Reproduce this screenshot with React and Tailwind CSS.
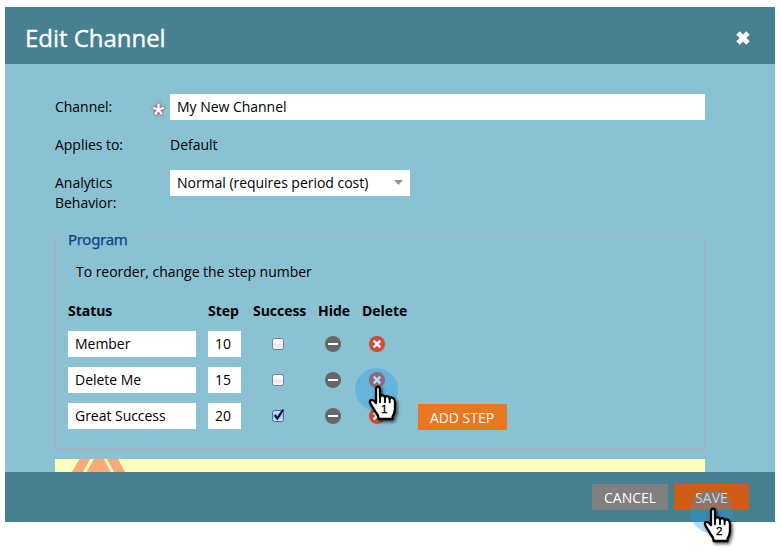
const FONT = "font-['Open_Sans','Noto_Sans',sans-serif]";

function Pointer({ label, uid }) {
  return (
    <svg width="56" height="66" viewBox="0 0 168 198" className="block overflow-visible">
      <defs>
        <filter id={uid} x="-30%" y="-30%" width="170%" height="170%">
          <feDropShadow dx="5" dy="6" stdDeviation="4" floodColor="#000" floodOpacity="0.6" />
        </filter>
      </defs>
      <circle cx="65" cy="65" r="64.5" fill="#1c9fed" fillOpacity="0.35" />
      <g filter={`url(#${uid})`}>
        <path
          d="M63 105V64Q63 56 69 56Q75 56 75 64V87Q77 81 84 82Q89 83 90 89Q93 83 99 85Q104 87 104 92Q108 86 114 90Q120 94 120 103V124Q119 136 113 145L112 153H71L69 143Q65 136 61 131L47 108Q42 99 48 96Q55 94 63 105Z"
          fill="#fff"
          stroke="#000"
          strokeWidth="7"
          strokeLinejoin="round"
        />
        <path d="M75 84V103M90 87V103M104 91V103" stroke="#000" strokeWidth="5.500" strokeLinecap="round" />
      </g>
      <text
        x="88"
        y="136"
        textAnchor="middle"
        fontSize="35"
        fontFamily="Liberation Sans, Arial, sans-serif"
        fill="#000"
        stroke="#000"
        strokeWidth="0.8"
        letterSpacing="0"
      >
        {label}
      </text>
    </svg>
  );
}

function Check({ checked }) {
  return (
    <svg width="14" height="14" viewBox="0 0 14 14" className="block overflow-visible">
      <defs>
        <linearGradient id="boxOff" x1="0" y1="0" x2="0" y2="1">
          <stop offset="0" stopColor="#fff" />
          <stop offset="0.5" stopColor="#f3f3f3" />
          <stop offset="0.55" stopColor="#e6e6e6" />
          <stop offset="1" stopColor="#fafafa" />
        </linearGradient>
        <linearGradient id="boxOn" x1="0" y1="0" x2="0" y2="1">
          <stop offset="0" stopColor="#d2e6fa" />
          <stop offset="0.5" stopColor="#8fc3f2" />
          <stop offset="1" stopColor="#d0f3ff" />
        </linearGradient>
      </defs>
      <rect
        x="1.500"
        y="1.500"
        width="11"
        height="11"
        rx="2"
        fill={checked ? "url(#boxOn)" : "url(#boxOff)"}
        stroke={checked ? "#4a62a8" : "#70858c"}
      />
      {checked && <path d="M3.800 6L6.300 9.500L12.300 0.500" fill="none" stroke="#0b1126" strokeWidth="2.200" />}
    </svg>
  );
}

function HideIcon() {
  return (
    <svg width="16" height="16" viewBox="0 0 16 16" className="block">
      <circle cx="8" cy="8" r="8" fill="#666" />
      <path d="M3 8H13" stroke="#fff" strokeWidth="2" />
    </svg>
  );
}

function DeleteIcon() {
  return (
    <svg width="16" height="16" viewBox="0 0 16 16" className="block">
      <circle cx="8" cy="8" r="8" fill="#cf4b34" />
      <path d="M4.700 4.700L11.300 11.300M11.300 4.700L4.700 11.300" stroke="#fff" strokeWidth="2.500" />
    </svg>
  );
}

const rows = [
  { name: "Member", step: "10", checked: false },
  { name: "Delete Me", step: "15", checked: false, pointer: true },
  { name: "Great Success", step: "20", checked: true, last: true },
];

export default function App() {
  return (
    <div
      className={`h-[555px] w-[782px] overflow-hidden bg-white pt-[7px] pl-[5px] text-[14px] leading-5 tracking-[-0.03px] text-black ${FONT}`}
    >
      <div className="flex h-[515px] w-[770px] flex-col bg-[#8ac1d3]">
        <header className="flex h-[57px] shrink-0 items-center justify-between bg-[#468091] pr-[25px] pl-5">
          <h1 className="pt-1 text-[24px] leading-8 text-white [-webkit-text-stroke:0.35px_white]">Edit Channel</h1>
          <svg width="14" height="14" viewBox="0 0 14 14" className="mt-1 block">
            <path d="M2 2L12 12M12 2L2 12" stroke="#fff" strokeWidth="4.800" />
          </svg>
        </header>

        <main className="flex h-[408px] shrink-0 flex-col overflow-hidden px-[50px] pt-[30px]">
          <div className="flex h-[26px] w-[650px] items-center">
            <span className="w-24">Channel:</span>
            <span className="flex w-[19px] items-center">
              <svg width="15" height="15" viewBox="0 0 15 15" className="mt-1 block overflow-visible">
                <defs>
                  <filter id="requiredGlow" x="-40%" y="-40%" width="180%" height="180%">
                    <feDropShadow dx="0" dy="0" stdDeviation="1.200" floodColor="#c02a36" floodOpacity="1" />
                    <feDropShadow dx="0" dy="0" stdDeviation="1.200" floodColor="#c02a36" floodOpacity="0.4" />
                  </filter>
                </defs>
                <path
                  filter="url(#requiredGlow)"
                  d="M7.500 7.500V1.800M7.500 7.500L2 5.900M7.500 7.500L13 5.900M7.500 7.500L4.200 12.300M7.500 7.500L10.800 12.300"
                  stroke="#fff"
                  strokeWidth="1.900"
                />
              </svg>
            </span>
            <span className="flex h-[26px] flex-1 items-center bg-white pl-[7px]">My New Channel</span>
          </div>

          <div className="mt-[15px] flex h-5">
            <span className="w-[115px]">Applies to:</span>
            <span>Default</span>
          </div>

          <div className="mt-[15px] flex h-[46px]">
            <span className="w-[115px] pt-[3px] pr-10">Analytics Behavior:</span>
            <span className="flex h-[26px] w-60 items-center justify-between bg-white px-[7px]">
              Normal (requires period cost)
              <svg width="9" height="5" viewBox="0 0 9 5" className="-mt-0.5 block">
                <path d="M0 0H9L4.500 5Z" fill="#929292" />
              </svg>
            </span>
          </div>

          <fieldset className="mt-[13px] h-[220px] w-[650px] shrink-0 border border-solid border-[#b5a9bd] pl-3">
            <legend className="-ml-0.5 h-[19px] pr-0.5 pl-0.5 font-['Noto_Sans','Open_Sans',sans-serif] text-[15px] leading-5 tracking-[-0.3px] text-[#15428b] [-webkit-text-stroke:0.25px_#15428b]">
              Program
            </legend>
            <p className="mt-[14px] pl-2">To reorder, change the step number</p>
            <div className="mt-[19px] flex h-5 font-bold whitespace-nowrap">
              <span className="w-[140px]">Status</span>
              <span className="w-[45px]">Step</span>
              <span className="w-[65px]">Success</span>
              <span className="w-11">Hide</span>
              <span>Delete</span>
            </div>
            <div className="mt-2.5 flex flex-col gap-2.5">
              {rows.map((r) => (
                <div key={r.name} className="flex h-[26px] items-center">
                  <span className="mr-3 flex h-[26px] w-32 items-center bg-white pl-[7px]">{r.name}</span>
                  <span className="mr-[30px] flex h-[26px] w-[33px] items-center bg-white pl-[7px]">{r.step}</span>
                  <Check checked={r.checked} />
                  <span className="mr-7 ml-10">
                    <HideIcon />
                  </span>
                  <span className="relative">
                    <DeleteIcon />
                    {r.pointer && (
                      <span className="absolute top-[-4px] left-[-14px] z-10">
                        <Pointer label="1" uid="pointerOne" />
                      </span>
                    )}
                  </span>
                  {r.last && (
                    <button className="mt-0.5 ml-[33px] h-[26px] w-[89px] bg-[#e87722] pt-0.5 pr-px text-white">
                      ADD STEP
                    </button>
                  )}
                </div>
              ))}
            </div>
          </fieldset>

          <div className="mt-2.5 h-[13px] w-[650px] shrink-0 bg-[#fffec1] pl-[17px]">
            <svg width="54" height="13" viewBox="0 0 54 13" className="block">
              <path d="M7.500 0H18L11 13H0ZM22 0H31.500L39 13H14.500ZM35 0H46L53 13H42Z" fill="#fda975" />
            </svg>
          </div>
        </main>

        <footer className="flex h-[50px] shrink-0 items-center justify-end gap-1.5 bg-[#468091] pr-[26px]">
          <button className="h-[26px] w-[76px] bg-[#808080] pt-0.5 text-white">CANCEL</button>
          <button className="relative h-[26px] w-[75px] bg-[#cf5d17] pt-0.5 text-white">
            SAVE
            <span className="absolute top-[6px] left-[16px] z-10">
              <Pointer label="2" uid="pointerTwo" />
            </span>
          </button>
        </footer>
      </div>
    </div>
  );
}
